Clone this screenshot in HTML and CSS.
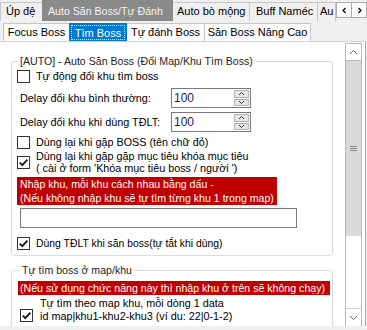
FILE: index.html
```html
<!DOCTYPE html>
<html lang="vi">
<head>
<meta charset="utf-8">
<title>Auto Săn Boss</title>
<link rel="stylesheet" href="styles.css">
</head>
<body>
<div class="window">
  <div class="tabstrip">
    <div class="tab tab-up">Úp đệ</div>
    <div class="tab tab-auto active">Auto Săn Boss/Tự Đánh</div>
    <div class="tab tab-bo">Auto bò mộng</div>
    <div class="tab tab-buff">Buff Naméc</div>
    <div class="tab tab-au">Au</div>
    <div class="tab-arrows">
      <span class="arrow"><svg width="7" height="7" viewBox="0 0 7 7"><path d="M4.5 1 L2 3.5 L4.5 6" fill="none" stroke="#000" stroke-width="1.2"/></svg></span>
      <span class="arrow"><svg width="7" height="7" viewBox="0 0 7 7"><path d="M2.5 1 L5 3.5 L2.5 6" fill="none" stroke="#000" stroke-width="1.2"/></svg></span>
    </div>
  </div>

  <div class="substrip">
    <div class="subtab st-focus">Focus Boss</div>
    <div class="subtab st-tim active"><span class="focus-ring">Tìm Boss</span></div>
    <div class="subtab st-tu">Tự đánh Boss</div>
    <div class="subtab st-san">Săn Boss Nâng Cao</div>
  </div>

  <div class="subpage">
    <div class="content">
      <div class="group g1">
        <div class="group-title">[AUTO] - Auto Săn Boss (Đổi Map/Khu Tìm Boss)</div>

        <div class="check r-auto"><span class="box"></span><span class="check-text">Tự động đổi khu tìm boss</span></div>

        <div class="field r-delay1">
          <span class="field-label">Delay đổi khu bình thường:</span>
          <div class="spin">
            <span class="spin-value">100</span>
            <div class="spin-btns">
              <span class="spin-btn"><svg width="7" height="5" viewBox="0 0 7 5"><path d="M1 4 L3.5 1.5 L6 4" fill="none" stroke="#333" stroke-width="1"/></svg></span>
              <span class="spin-btn"><svg width="7" height="5" viewBox="0 0 7 5"><path d="M1 1 L3.5 3.5 L6 1" fill="none" stroke="#333" stroke-width="1"/></svg></span>
            </div>
          </div>
        </div>

        <div class="field r-delay2">
          <span class="field-label">Delay đổi khu khi dùng TĐLT:</span>
          <div class="spin">
            <span class="spin-value">100</span>
            <div class="spin-btns">
              <span class="spin-btn"><svg width="7" height="5" viewBox="0 0 7 5"><path d="M1 4 L3.5 1.5 L6 4" fill="none" stroke="#333" stroke-width="1"/></svg></span>
              <span class="spin-btn"><svg width="7" height="5" viewBox="0 0 7 5"><path d="M1 1 L3.5 3.5 L6 1" fill="none" stroke="#333" stroke-width="1"/></svg></span>
            </div>
          </div>
        </div>

        <div class="check r-boss"><span class="box"></span><span class="check-text">Dùng lại khi gặp BOSS (tên chữ đỏ)</span></div>

        <div class="check multi r-target"><span class="box checked"><svg width="11" height="11" viewBox="0 0 11 11"><path d="M1.8 5.6 L4.3 8.2 L9.4 2.6" fill="none" stroke="#1a1a1a" stroke-width="1.9"/></svg></span><span class="check-text">Dùng lại khi gặp gặp mục tiêu khóa mục tiêu<br>( cài ở form 'Khóa mục tiêu boss / người ')</span></div>

        <div class="redbox r-note">Nhập khu, mỗi khu cách nhau bằng dấu -<br>(Nếu không nhập khu sẽ tự tìm từng khu 1 trong map)</div>

        <div class="textbox r-input"></div>

        <div class="check r-tdlt"><span class="box checked"><svg width="11" height="11" viewBox="0 0 11 11"><path d="M1.8 5.6 L4.3 8.2 L9.4 2.6" fill="none" stroke="#1a1a1a" stroke-width="1.9"/></svg></span><span class="check-text">Dùng TĐLT khi săn boss(tự tắt khi dùng)</span></div>
      </div>

      <div class="group g2">
        <div class="group-title">Tự tìm boss ở map/khu</div>
        <div class="redbar">(Nếu sử dụng chức năng này thì nhập khu ở trên sẽ không chạy)</div>
        <div class="check multi r-map"><span class="box checked"><svg width="11" height="11" viewBox="0 0 11 11"><path d="M1.8 5.6 L4.3 8.2 L9.4 2.6" fill="none" stroke="#1a1a1a" stroke-width="1.9"/></svg></span><span class="check-text">Tự tìm theo map khu, mỗi dòng 1 data<br>id map|khu1-khu2-khu3 (ví du: 22|0-1-2)</span></div>
      </div>
    </div>

    <div class="vscroll">
      <div class="sb-btn sb-up"><svg width="9" height="6" viewBox="0 0 9 6"><path d="M1 5 L4.5 1.5 L8 5" fill="none" stroke="#606060" stroke-width="1"/></svg></div>
      <div class="sb-thumb"><svg width="7" height="6" viewBox="0 0 7 6"><path d="M0 0.5 H7 M0 2.5 H7 M0 4.5 H7" stroke="#8a8a8a" stroke-width="1"/></svg></div>
      <div class="sb-track"></div>
      <div class="sb-btn sb-down"><svg width="9" height="6" viewBox="0 0 9 6"><path d="M1 1 L4.5 4.5 L8 1" fill="none" stroke="#606060" stroke-width="1"/></svg></div>
    </div>
  </div>
</div>
</body>
</html>
```

FILE: styles.css
```css
html, body {
  margin: 0;
  padding: 0;
}

body {
  background: #f0f0f0;
  font-family: "Liberation Sans", Arial, sans-serif;
  font-size: 10.6px;
  line-height: 13px;
  color: #000;
  overflow: hidden;
}

.window {
  width: 367px;
  height: 330px;
  overflow: hidden;
}

/* ---------- top tab strip ---------- */
.tabstrip {
  height: 21px;
  display: flex;
  align-items: flex-end;
}

.tab {
  box-sizing: border-box;
  height: 19px;
  border: 1px solid #c6c6c6;
  border-bottom: none;
  margin-right: -1px;
  padding-left: 5px;
  line-height: 17px;
  font-size: 11px;
  white-space: nowrap;
  overflow: hidden;
  background: #f0f0f0;
  flex: none;
}

.tab.active {
  height: 21px;
  padding-top: 2px;
  background: #8a8a8a;
  border-color: #8a8a8a;
  color: #f5f5f5;
  position: relative;
  z-index: 1;
  font-size: 10.6px;
}

.tab-up { width: 43px; }
.tab-auto { width: 131px; }
.tab-bo { width: 78px; padding-left: 4px; }
.tab-buff { width: 69px; padding-left: 6px; }
.tab-au { width: 19px; padding-left: 2px; }

.tab-arrows {
  align-self: flex-start;
  margin-top: 2px;
  margin-left: 1px;
  display: flex;
}

.arrow {
  box-sizing: border-box;
  width: 16px;
  height: 16px;
  border: 1px solid #adadad;
  background: #fbfbfb;
  display: flex;
  align-items: center;
  justify-content: center;
  margin-right: -1px;
}

/* ---------- sub tab strip ---------- */
.substrip {
  height: 20px;
  display: flex;
  align-items: flex-end;
  padding-left: 3px;
  background: #f0f0f0;
}

.subtab {
  box-sizing: border-box;
  height: 18px;
  border: 1px solid #c6c6c6;
  border-bottom: none;
  margin-right: -1px;
  text-align: center;
  line-height: 16px;
  font-size: 11px;
  white-space: nowrap;
  background: #fcfcfc;
  flex: none;
}

.subtab.active {
  background: #0078d7;
  border-color: #0078d7;
  color: #fff;
  padding: 1px;
  position: relative;
  z-index: 1;
}

.focus-ring {
  display: block;
  height: 15px;
  line-height: 14px;
  border: 1px dotted #e8e8e8;
  box-sizing: border-box;
}

.st-focus { width: 67px; }
.st-tim { width: 58px; }
.st-tu { width: 79px; }
.st-san { width: 107px; }

/* ---------- sub page ---------- */
.subpage {
  box-sizing: border-box;
  width: 366px;
  height: 285px;
  background: #fff;
  border-top: 1px solid #d4d4d4;
  border-right: 1px solid #a8a8a8;
  display: flex;
  overflow: hidden;
}

.content {
  width: 345px;
  flex: none;
  overflow: hidden;
}

.group {
  box-sizing: border-box;
  width: 322px;
  margin-left: 11px;
  border: 1px solid #dcdcdc;
  border-radius: 3px;
}

.g1 {
  margin-top: 19px;
  padding-bottom: 5px;
}

.g2 {
  margin-top: 14px;
  height: 80px;
}

.group-title {
  display: table;
  margin: -7px 0 0 6px;
  padding: 0 2px;
  background: #fff;
  color: #1e1e1e;
  line-height: 13px;
  white-space: nowrap;
}

.g2 .group-title { margin-left: 8px; }

/* checkbox rows */
.check {
  display: flex;
  align-items: center;
  margin-left: 5px;
  white-space: nowrap;
}

.check-text {
  font-size: 10.8px;
}

.box {
  box-sizing: border-box;
  width: 13px;
  height: 13px;
  border: 1px solid #333;
  background: #fff;
  flex: none;
  display: flex;
  align-items: center;
  justify-content: center;
  margin-right: 6px;
}

.r-auto { margin-top: 2px; }
.r-boss { margin-top: 4px; }
.r-target { margin-top: 1px; }
.r-target .check-text { line-height: 12px; }
.r-tdlt { margin-top: 9px; }
.r-tdlt .check-text { font-size: 10.4px; }

.r-map {
  margin-top: 2px;
  margin-left: 8px;
  align-items: flex-start;
}
.r-map .box {
  margin-right: 7px;
  margin-top: 12px;
}

/* numeric fields */
.field {
  display: flex;
  align-items: center;
  height: 20px;
  margin-left: 8px;
}

.field-label {
  width: 151px;
  flex: none;
  white-space: nowrap;
  font-size: 10.8px;
}

.r-delay1 { margin-top: 5px; }
.r-delay2 { margin-top: 4px; }

.spin {
  box-sizing: border-box;
  width: 80px;
  height: 20px;
  border: 1px solid #7a7a7a;
  display: flex;
  align-items: stretch;
}

.spin-value {
  flex: 1;
  padding-left: 2px;
  line-height: 18px;
  color: #231a5c;
  font-size: 12px;
}

.spin-btns {
  width: 15px;
  display: flex;
  flex-direction: column;
  padding: 1px;
  gap: 1px;
}

.spin-btn {
  flex: 1;
  box-sizing: border-box;
  border: 1px solid #b4b4b4;
  background: #e6e6e6;
  display: flex;
  align-items: center;
  justify-content: center;
}

/* red notes */
.redbox {
  box-sizing: border-box;
  width: 260px;
  height: 28px;
  margin: 3px 0 0 5px;
  padding: 0 0 0 3px;
  background: #c00000;
  color: #fff;
  line-height: 14px;
  white-space: nowrap;
  overflow: hidden;
}

.redbar {
  box-sizing: border-box;
  width: 312px;
  height: 14px;
  margin: 4px 0 0 6px;
  padding-left: 2px;
  background: #c00000;
  color: #fff;
  line-height: 14px;
  white-space: nowrap;
  overflow: hidden;
}

.textbox {
  box-sizing: border-box;
  width: 277px;
  height: 20px;
  margin: 3px 0 0 8px;
  border: 1px solid #7a7a7a;
  background: #fff;
}

/* ---------- vertical scrollbar ---------- */
.vscroll {
  box-sizing: border-box;
  width: 17px;
  margin-top: 1px;
  flex: none;
  display: flex;
  flex-direction: column;
  border-left: 1px solid #b9b9b9;
  border-right: 1px solid #b9b9b9;
}

.sb-btn {
  height: 16px;
  flex: none;
  display: flex;
  align-items: center;
  justify-content: center;
  background: #fff;
}

.sb-up {
  border-top: 1px solid #b9b9b9;
  border-bottom: 1px solid #b9b9b9;
}

.sb-down {
  border-top: 1px solid #d0d0d0;
  height: 17px;
}

.sb-thumb {
  height: 175px;
  flex: none;
  background: #dadada;
  display: flex;
  align-items: center;
  justify-content: center;
}

.sb-track {
  flex: 1;
  background: #fff;
}
```
